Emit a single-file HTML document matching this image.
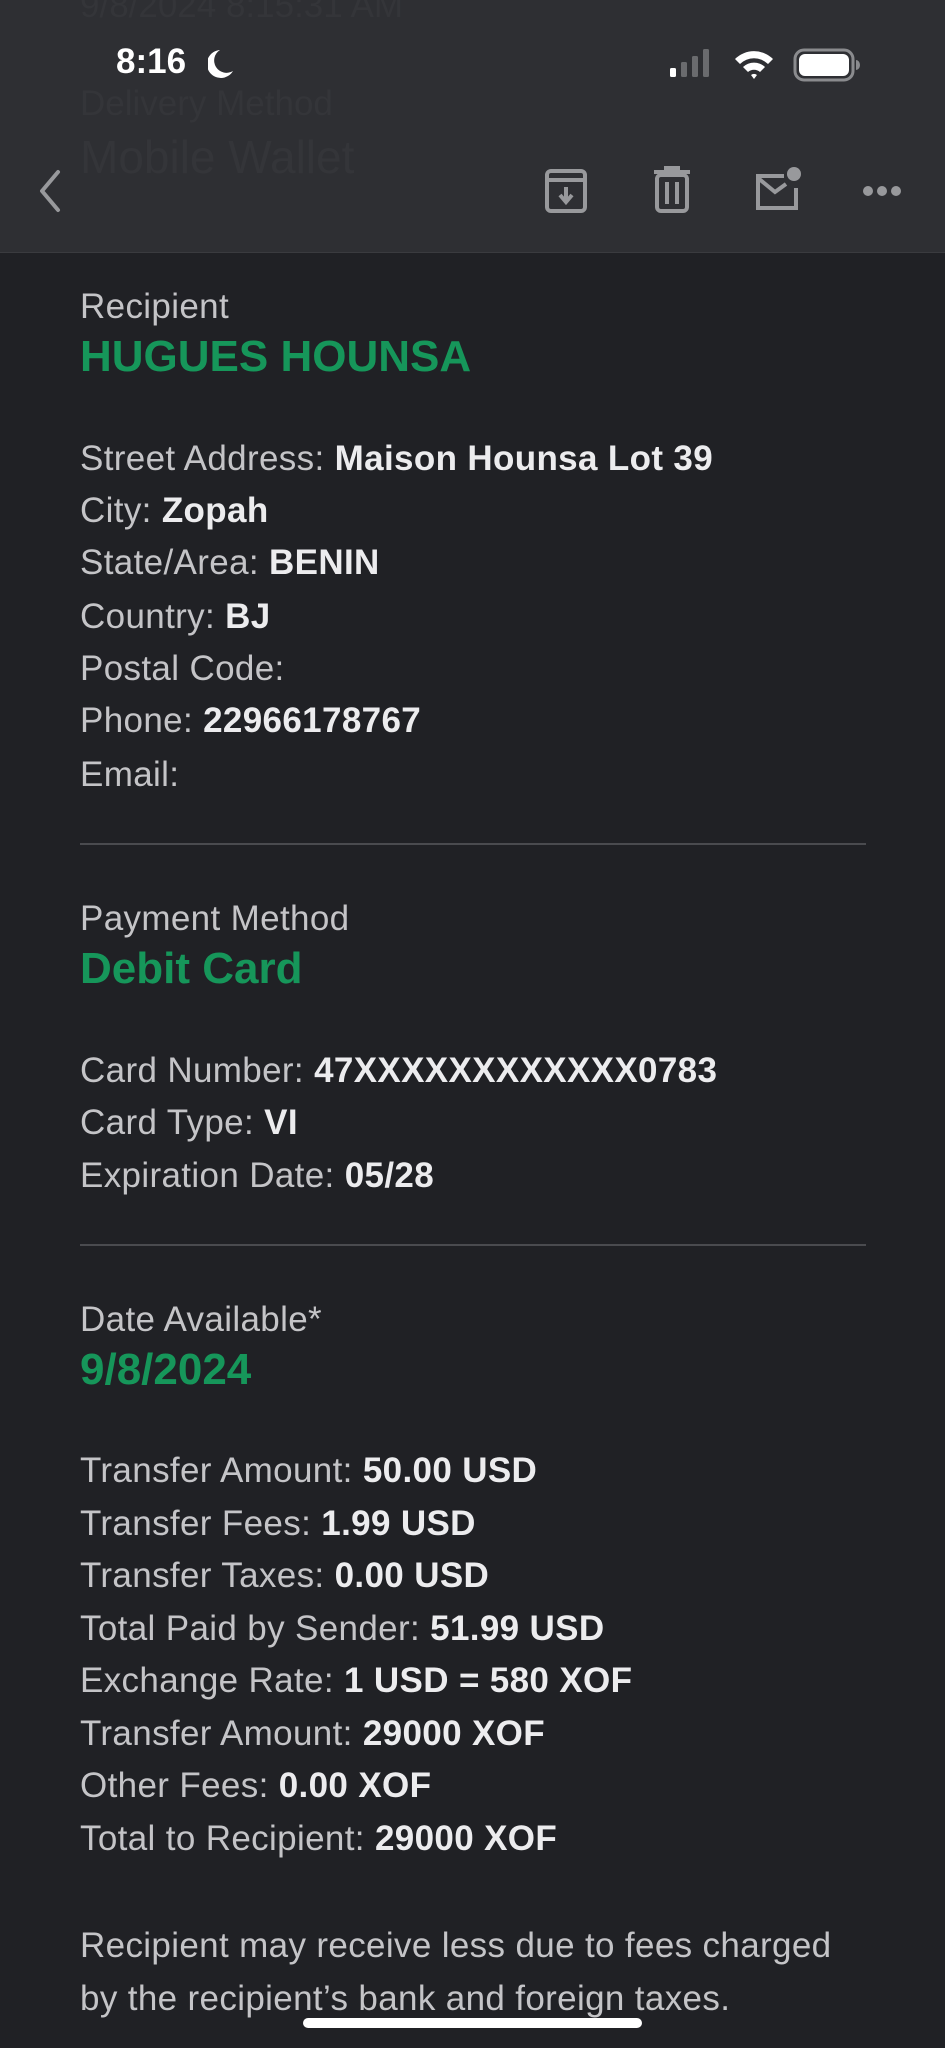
<!DOCTYPE html>
<html><head><meta charset="utf-8"><style>
body{margin:0;width:945px;height:2048px;background:#202125;overflow:hidden;position:relative;font-family:"Liberation Sans",sans-serif;}
.l{position:absolute;left:80px;font-size:35px;letter-spacing:0.35px;color:#c4c4c7;white-space:nowrap;line-height:40px;margin-top:2px;}
.l b{color:#ececee;}
.g{position:absolute;left:80px;font-size:44px;font-weight:bold;color:#16965a;line-height:50px;white-space:nowrap;margin-top:1px;}
.hr{position:absolute;left:80px;width:786px;height:2px;background:#4a4b4f;}
.hdr{position:absolute;left:0;top:0;width:945px;height:252px;background:#2e2f33;border-bottom:1px solid #3a3b3f;}
.f{position:absolute;left:80px;color:#343539;white-space:nowrap;}
</style></head><body>
<div class="hdr">
<div class="f" style="top:-14px;font-size:35px;">9/8/2024 8:15:31 AM</div>
<div class="f" style="top:84px;font-size:35px;">Delivery Method</div>
<div class="f" style="top:130px;font-size:46px;">Mobile Wallet</div>
<div style="position:absolute;left:116px;top:42px;color:#fff;font-size:35px;font-weight:bold;">8:16</div>
<svg style="position:absolute;left:208px;top:49px" width="26" height="30" viewBox="0 0 26 30"><path d="M12 1 A14 14 0 1 0 25 22 A12 12 0 0 1 12 1Z" fill="#fff"/></svg>
<svg style="position:absolute;left:668px;top:48px" width="52" height="30" viewBox="0 0 52 30"><rect x="2" y="20" width="6" height="9" rx="1.5" fill="#fff"/><rect x="13" y="14" width="6" height="15" rx="1.5" fill="#6a6b6e"/><rect x="24" y="8" width="6" height="21" rx="1.5" fill="#6a6b6e"/><rect x="35" y="1" width="6" height="28" rx="1.5" fill="#6a6b6e"/></svg>
<svg style="position:absolute;left:733px;top:48px" width="42" height="32" viewBox="0 0 42 32"><path d="M2 11 A27 27 0 0 1 40 11 L35 16 A20 20 0 0 0 7 16Z M10 19 A16 16 0 0 1 32 19 L27 24 A9 9 0 0 0 15 24Z M18 27 A5 5 0 0 1 24 27 L21 31Z" fill="#fff"/></svg>
<svg style="position:absolute;left:793px;top:48px" width="68" height="34" viewBox="0 0 68 34"><rect x="2" y="2" width="58" height="30" rx="9" fill="none" stroke="#8a8b8e" stroke-width="3"/><rect x="6" y="6" width="50" height="22" rx="6" fill="#fff"/><path d="M63 12 a4 5 0 0 1 0 10z" fill="#8a8b8e"/></svg>
<svg style="position:absolute;left:34px;top:168px" width="30" height="46" viewBox="0 0 30 46"><path d="M24 4 L8 23 L24 42" fill="none" stroke="#98999c" stroke-width="4" stroke-linecap="round" stroke-linejoin="round"/></svg>
<svg style="position:absolute;left:544px;top:168px" width="44" height="46" viewBox="0 0 44 46"><rect x="3" y="3" width="38" height="40" rx="4" fill="none" stroke="#98999c" stroke-width="4"/><line x1="3" y1="12" x2="41" y2="12" stroke="#98999c" stroke-width="4"/><path d="M22 19 V33 M16 27 L22 34 L28 27" fill="none" stroke="#98999c" stroke-width="4"/></svg>
<svg style="position:absolute;left:652px;top:166px" width="40" height="48" viewBox="0 0 40 48"><path d="M2 6 H38 M14 6 V2 H26 V6" fill="none" stroke="#98999c" stroke-width="4"/><rect x="5" y="9" width="30" height="36" rx="4" fill="none" stroke="#98999c" stroke-width="4"/><path d="M15 16 V38 M25 16 V38" stroke="#98999c" stroke-width="4"/></svg>
<svg style="position:absolute;left:754px;top:166px" width="48" height="46" viewBox="0 0 48 46"><path d="M30 10 H4 V42 H42 V22" fill="none" stroke="#98999c" stroke-width="4"/><path d="M4 12 L21 26 L32 18" fill="none" stroke="#98999c" stroke-width="4"/><circle cx="40" cy="8" r="7" fill="#98999c"/></svg>
<svg style="position:absolute;left:862px;top:184px" width="40" height="14" viewBox="0 0 40 14"><circle cx="6" cy="7" r="5" fill="#98999c"/><circle cx="20" cy="7" r="5" fill="#98999c"/><circle cx="34" cy="7" r="5" fill="#98999c"/></svg>
</div>
<div class="l" style="top:285px">Recipient</div>
<div class="g" style="top:331px">HUGUES HOUNSA</div>
<div class="l" style="top:437px">Street Address: <b>Maison Hounsa Lot 39</b></div>
<div class="l" style="top:489px">City: <b>Zopah</b></div>
<div class="l" style="top:541px">State/Area: <b>BENIN</b></div>
<div class="l" style="top:595px">Country: <b>BJ</b></div>
<div class="l" style="top:647px">Postal Code:</div>
<div class="l" style="top:699px">Phone: <b>22966178767</b></div>
<div class="l" style="top:753px">Email:</div>
<div class="hr" style="top:843px"></div>
<div class="l" style="top:897px">Payment Method</div>
<div class="g" style="top:943px">Debit Card</div>
<div class="l" style="top:1049px">Card Number: <b>47XXXXXXXXXXXX0783</b></div>
<div class="l" style="top:1101px">Card Type: <b>VI</b></div>
<div class="l" style="top:1154px">Expiration Date: <b>05/28</b></div>
<div class="hr" style="top:1244px"></div>
<div class="l" style="top:1298px">Date Available*</div>
<div class="g" style="top:1344px">9/8/2024</div>
<div class="l" style="top:1449px">Transfer Amount: <b>50.00 USD</b></div>
<div class="l" style="top:1502px">Transfer Fees: <b>1.99 USD</b></div>
<div class="l" style="top:1554px">Transfer Taxes: <b>0.00 USD</b></div>
<div class="l" style="top:1607px">Total Paid by Sender: <b>51.99 USD</b></div>
<div class="l" style="top:1659px">Exchange Rate: <b>1 USD = 580 XOF</b></div>
<div class="l" style="top:1712px">Transfer Amount: <b>29000 XOF</b></div>
<div class="l" style="top:1764px">Other Fees: <b>0.00 XOF</b></div>
<div class="l" style="top:1817px">Total to Recipient: <b>29000 XOF</b></div>
<div class="l" style="top:1924px">Recipient may receive less due to fees charged</div>
<div class="l" style="top:1977px">by the recipient’s bank and foreign taxes.</div>
<div style="position:absolute;left:303px;top:2018px;width:339px;height:10px;border-radius:5px;background:#fff;"></div>
</body></html>
